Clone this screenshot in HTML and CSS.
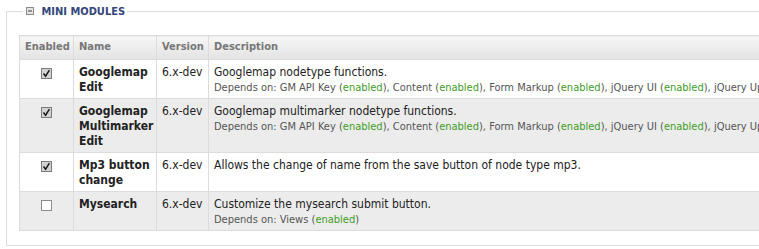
FILE: index.html
```html
<!DOCTYPE html>
<html lang="en">
<head>
  <meta charset="UTF-8" />
  <title>Modules</title>
  <link rel="stylesheet" href="styles.css">
</head>
<body>
  <div class="page">
    <fieldset class="modules">
      <legend>
        <svg class="toggle" viewBox="0 0 8 8" width="8" height="8"><rect x="0.5" y="0.5" width="7" height="7" fill="#e4e4e4" stroke="#8a8a8a"/><path d="M2 4h4" stroke="#444" stroke-width="1"/></svg>
        Mini modules
      </legend>

      <table class="module-table">
        <colgroup>
          <col class="col-enabled">
          <col class="col-name">
          <col class="col-version">
          <col>
        </colgroup>
        <thead>
          <tr>
            <th>Enabled</th>
            <th>Name</th>
            <th>Version</th>
            <th>Description</th>
          </tr>
        </thead>
        <tbody>
          <tr class="odd">
            <td class="enabled"><svg class="check" viewBox="0 0 11 11" width="11" height="11"><rect x="0.5" y="0.5" width="10" height="10" fill="#d2d2d2" stroke="#7c7c7c"/><path d="M2.5 5.5L4.6 8.2L8.4 2.2" fill="none" stroke="#111" stroke-width="1.4"/></svg></td>
            <td class="name">Googlemap Edit</td>
            <td class="version">6.x-dev</td>
            <td class="desc">
              Googlemap nodetype functions.
              <div class="deps">Depends on: GM API Key (<span class="on">enabled</span>), Content (<span class="on">enabled</span>), Form Markup (<span class="on">enabled</span>), jQuery UI (<span class="on">enabled</span>), jQuery Update (<span class="on">enabled</span>)</div>
            </td>
          </tr>
          <tr class="even">
            <td class="enabled"><svg class="check" viewBox="0 0 11 11" width="11" height="11"><rect x="0.5" y="0.5" width="10" height="10" fill="#d2d2d2" stroke="#7c7c7c"/><path d="M2.5 5.5L4.6 8.2L8.4 2.2" fill="none" stroke="#111" stroke-width="1.4"/></svg></td>
            <td class="name">Googlemap Multimarker Edit</td>
            <td class="version">6.x-dev</td>
            <td class="desc">
              Googlemap multimarker nodetype functions.
              <div class="deps">Depends on: GM API Key (<span class="on">enabled</span>), Content (<span class="on">enabled</span>), Form Markup (<span class="on">enabled</span>), jQuery UI (<span class="on">enabled</span>), jQuery Update (<span class="on">enabled</span>)</div>
            </td>
          </tr>
          <tr class="odd">
            <td class="enabled"><svg class="check" viewBox="0 0 11 11" width="11" height="11"><rect x="0.5" y="0.5" width="10" height="10" fill="#d2d2d2" stroke="#7c7c7c"/><path d="M2.5 5.5L4.6 8.2L8.4 2.2" fill="none" stroke="#111" stroke-width="1.4"/></svg></td>
            <td class="name">Mp3 button change</td>
            <td class="version">6.x-dev</td>
            <td class="desc">Allows the change of name from the save button of node type mp3.</td>
          </tr>
          <tr class="even">
            <td class="enabled"><svg class="check" viewBox="0 0 11 11" width="11" height="11"><rect x="0.5" y="0.5" width="10" height="10" fill="#fff" stroke="#8c8c8c"/></svg></td>
            <td class="name">Mysearch</td>
            <td class="version">6.x-dev</td>
            <td class="desc">
              Customize the mysearch submit button.
              <div class="deps">Depends on: Views (<span class="on">enabled</span>)</div>
            </td>
          </tr>
        </tbody>
      </table>
    </fieldset>
  </div>
</body>
</html>
```

FILE: styles.css
```css
:root {
  --color-border: #dcdcdc;
  --color-legend: #34467a;
  --color-head: #777;
  --color-text: #222;
  --color-muted: #555;
  --color-enabled: #3f9c1f;
  --color-even: #ececec;
}

body {
  margin: 0;
  background: #fff;
  color: var(--color-text);
  font-family: "DejaVu Sans Condensed", "DejaVu Sans", sans-serif;
  overflow: hidden;
}

.page {
  padding: 4px 0 0 6px;
}

.modules {
  width: 1100px;
  margin: 0;
  padding: 16px 12px 14px;
  border: 1px solid var(--color-border);
}

.modules legend {
  margin-left: 4px;
  padding: 0 2px 0 3px;
  font-size: 11px;
  line-height: 15px;
  font-weight: bold;
  text-transform: uppercase;
  color: var(--color-legend);
}

.toggle {
  margin-right: 4px;
  vertical-align: 0;
}

.module-table {
  width: 100%;
  table-layout: fixed;
  border-collapse: collapse;
  border: 1px solid var(--color-border);
}

.col-enabled { width: 54px; }
.col-name { width: 83px; }
.col-version { width: 52px; }

.module-table th {
  padding: 3px 5px 5px;
  font-size: 11px;
  line-height: 15px;
  text-align: left;
  color: var(--color-head);
  background: linear-gradient(#f6f6f6, #e3e3e3);
  border: 1px solid var(--color-border);
}

.module-table td {
  padding: 5px 5px 3px;
  font-size: 12px;
  line-height: 15px;
  vertical-align: top;
  border: 1px solid var(--color-border);
}

.module-table tr.odd { background: #fff; }
.module-table tr.even { background: var(--color-even); }

.module-table td.enabled {
  text-align: center;
}

.check {
  display: block;
  margin: 3px auto 0;
}

.module-table td.name {
  padding-right: 3px;
  font-weight: bold;
}

.deps {
  font-size: 11px;
  color: var(--color-muted);
  white-space: nowrap;
}

.on {
  color: var(--color-enabled);
}
```
